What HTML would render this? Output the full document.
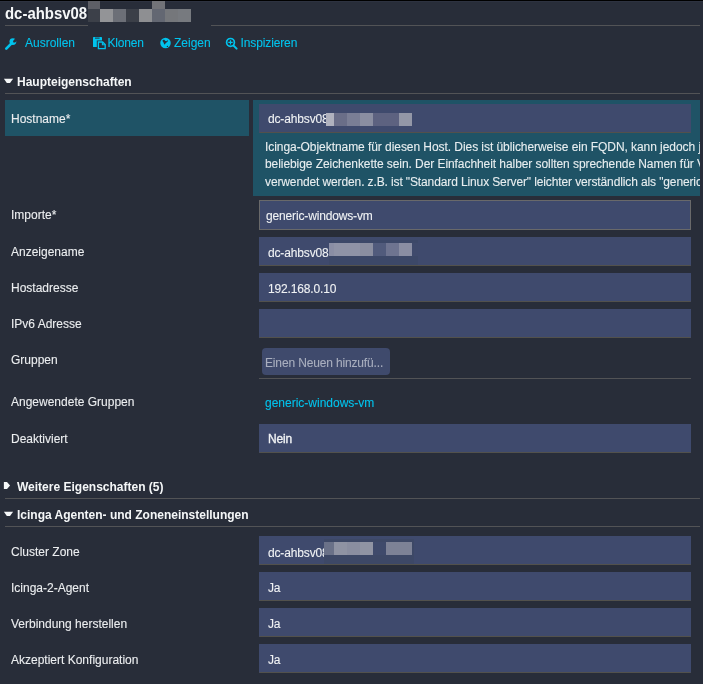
<!DOCTYPE html>
<html><head><meta charset="utf-8">
<style>
*{margin:0;padding:0;box-sizing:border-box}
.lbl,.itxt,.desc,.link{-webkit-text-stroke:0.1px currentColor}
html,body{width:703px;height:684px;overflow:hidden;background:#282d39;font-family:"Liberation Sans",sans-serif;font-size:12px;color:#eef0f2}
.a{position:absolute;white-space:nowrap}
.topline{position:absolute;left:0;top:0;width:703px;height:1px;background:#000;box-shadow:0 1px 0 #2d3240}
.hr{position:absolute;height:1px;background:#525356}
.title{left:5px;top:3px;font-size:16.5px;font-weight:bold;color:#f5f7f8;line-height:20px;transform:scaleX(0.905);transform-origin:0 0}
.px{position:absolute}
.link{color:#00c3ed;font-size:12px}
.sec{font-weight:bold;font-size:12px;color:#f5f7f8}
.lbl{left:11px;color:#eceef0}
.inp{position:absolute;left:259px;width:432px;height:29px;background:#3f4a6d;border-left:1px solid #3f4a6d;border-right:1px solid #3f4a6d;border-bottom:1px solid #52514c}
.desc{color:#e8eef0;letter-spacing:-0.07px}
.itxt{position:absolute;white-space:nowrap;color:#f0f2f4;letter-spacing:-0.15px}
svg{position:absolute;overflow:visible}
</style></head><body><div style="position:absolute;left:0;top:0;width:703px;height:684px;will-change:transform">
<div class="topline"></div>

<!-- title -->
<div class="a title">dc-ahbsv08</div>
<div class="hr" style="left:5px;top:25px;width:83px"></div>
<div class="hr" style="left:211px;top:25px;width:489px"></div>
<!-- pixel blocks title -->
<div class="px" style="left:88px;top:1px;width:12px;height:8px;background:#5e5f66"></div>
<div class="px" style="left:152px;top:1px;width:13px;height:8px;background:#727378"></div>
<div class="px" style="left:88px;top:9px;width:12px;height:13px;background:#3c4049"></div>
<div class="px" style="left:100px;top:9px;width:13px;height:13px;background:#939497"></div>
<div class="px" style="left:113px;top:9px;width:13px;height:13px;background:#6c6f77"></div>
<div class="px" style="left:126px;top:9px;width:13px;height:13px;background:#3b3f48"></div>
<div class="px" style="left:139px;top:9px;width:13px;height:13px;background:#8e8f92"></div>
<div class="px" style="left:152px;top:9px;width:13px;height:13px;background:#636772"></div>
<div class="px" style="left:165px;top:9px;width:13px;height:13px;background:#75777b"></div>
<div class="px" style="left:178px;top:9px;width:13px;height:13px;background:#777a7f"></div>

<!-- actions -->
<div class="a link" style="left:25px;top:36px">Ausrollen</div>
<div class="a link" style="left:107.5px;top:36px;letter-spacing:-0.2px">Klonen</div>
<div class="a link" style="left:174px;top:36px">Zeigen</div>
<div class="a link" style="left:240.5px;top:36px;letter-spacing:-0.12px">Inspizieren</div>


<!-- icons -->
<svg style="left:0;top:0" width="703" height="60">
  <g fill="#00c3ed" stroke="none">
    <line x1="6.3" y1="48.6" x2="11.5" y2="43.4" stroke="#00c3ed" stroke-width="2.7" stroke-linecap="round"/>
    <circle cx="12.9" cy="41.6" r="3.4"/>
    <circle cx="14.3" cy="41.4" r="1.2" fill="#282d39"/>
    <path d="M13.6 40.5 L15.4 38 L17.6 40.6 L15.1 42.2Z" fill="#282d39"/>
    <!-- clone -->
    <rect x="93" y="37" width="9" height="10" rx="0.6"/>
    <rect x="95" y="37.6" width="4.6" height="1" fill="#282d39"/>
    <path d="M96.8 40.4 H103.2 L106.8 44 V49.6 H96.8Z" fill="#282d39"/>
    <path d="M98.4 42 H102.6 L105.2 44.6 V48.6 H98.4Z" fill="none" stroke="#00c3ed" stroke-width="1.3"/>
    <path d="M102.4 42 V44.8 H105.2" fill="none" stroke="#00c3ed" stroke-width="1.1"/>
    <!-- globe -->
    <circle cx="165.5" cy="42.95" r="5.25"/>
    <path d="M162.3 40.7 L164 39.6 L165.4 40.9 L166.4 41.3 L167.9 40.1 L167.7 41.4 L165.6 43.2 L164.9 44.6 L164.2 44.3 L163.4 42.3Z" fill="#282d39"/>
    <circle cx="167.4" cy="46.4" r="0.7" fill="#282d39"/>
    <!-- search -->
    <circle cx="230.5" cy="42.4" r="3.9" fill="none" stroke="#00c3ed" stroke-width="1.7"/>
    <path d="M228.3 42.4 H232.7 M230.5 40.2 V44.6" stroke="#00c3ed" stroke-width="1.2"/>
    <line x1="233.6" y1="45.6" x2="236.6" y2="48.6" stroke="#00c3ed" stroke-width="2" stroke-linecap="round"/>
  </g>
</svg>

<!-- section 1 -->
<svg style="left:0;top:0" width="20" height="20"><path d="M3.9 78.8H13.1L10 83.1H6.8Z" fill="#f5f7f8"/></svg>
<div class="a sec" style="left:17px;top:75px">Haupteigenschaften</div>
<div class="hr" style="left:5px;top:93px;width:695px"></div>

<!-- hostname -->
<div class="px" style="left:5px;top:100px;width:244px;height:36px;background:#1f5366"></div>
<div class="a lbl" style="top:112px">Hostname*</div>
<div class="px" style="left:253px;top:100px;width:447px;height:96px;background:#1f5366;overflow:hidden">
</div>
<div class="inp" style="top:104px"></div>
<div class="itxt" style="left:268px;top:112px">dc-ahbsv08</div>

<!-- labels -->
<div class="a lbl" style="top:208px">Importe*</div>
<div class="a lbl" style="top:245px">Anzeigename</div>
<div class="a lbl" style="top:281px">Hostadresse</div>
<div class="a lbl" style="top:317px">IPv6 Adresse</div>
<div class="a lbl" style="top:353px">Gruppen</div>
<div class="a lbl" style="top:395px">Angewendete Gruppen</div>
<div class="a lbl" style="top:432px">Deaktiviert</div>

<!-- description -->
<div class="a desc" style="left:265px;top:140px;letter-spacing:-0.06px">Icinga-Objektname für diesen Host. Dies ist üblicherweise ein FQDN, kann jedoch jede</div>
<div class="a desc" style="left:265px;top:157px">beliebige Zeichenkette sein. Der Einfachheit halber sollten sprechende Namen für Vorlagen</div>
<div class="a desc" style="left:265px;top:175px;letter-spacing:-0.12px">verwendet werden. z.B. ist "Standard Linux Server" leichter verständlich als "generic-linux"</div>
<div class="px" style="left:700px;top:100px;width:3px;height:96px;background:#282d39"></div>

<!-- hostname blocks -->
<div class="px" style="left:326px;top:113px;width:8px;height:13px;background:#b0b2be"></div>
<div class="px" style="left:334px;top:113px;width:13px;height:13px;background:#6a6e88"></div>
<div class="px" style="left:347px;top:113px;width:13px;height:13px;background:#7a7e95"></div>
<div class="px" style="left:360px;top:113px;width:13px;height:13px;background:#8a8ea1"></div>
<div class="px" style="left:373px;top:113px;width:26px;height:13px;background:#5d6280"></div>
<div class="px" style="left:399px;top:113px;width:13px;height:13px;background:#9397a7"></div>

<!-- importe -->
<div class="inp" style="top:200px;height:30px;border:1px solid #69696a"></div>
<div class="itxt" style="left:266px;top:209px">generic-windows-vm</div>
<!-- anzeigename -->
<div class="inp" style="top:237px"></div>
<div class="itxt" style="left:268px;top:246px">dc-ahbsv08</div>
<div class="px" style="left:329px;top:240px;width:89px;height:25px;background:#3c4868"></div>
<div class="px" style="left:329px;top:243px;width:5px;height:13px;background:#8a8ea4"></div>
<div class="px" style="left:334px;top:243px;width:26px;height:13px;background:#8f93a6"></div>
<div class="px" style="left:360px;top:243px;width:13px;height:13px;background:#8a8ea0"></div>
<div class="px" style="left:373px;top:243px;width:13px;height:13px;background:#515b7c"></div>
<div class="px" style="left:386px;top:243px;width:13px;height:13px;background:#6e7490"></div>
<div class="px" style="left:399px;top:243px;width:13px;height:13px;background:#8a8ea3"></div>
<div class="px" style="left:412px;top:243px;width:6px;height:13px;background:#3f4a6c"></div>
<!-- hostadresse -->
<div class="inp" style="top:273px"></div>
<div class="itxt" style="left:268px;top:282px">192.168.0.10</div>
<!-- ipv6 -->
<div class="inp" style="top:309px"></div>
<!-- gruppen -->
<div class="px btn" style="left:262px;top:348px;width:128px;height:27px;background:#3f4a6c;border-radius:4px"></div>
<div class="itxt" style="left:265px;top:356px;color:#a9afbf">Einen Neuen hinzufü...</div>
<div class="hr" style="left:259px;top:378px;width:432px"></div>
<!-- angewendete -->
<div class="a link" style="left:265px;top:396px">generic-windows-vm</div>
<!-- deaktiviert -->
<div class="inp" style="top:424px"></div>
<div class="itxt" style="left:268px;top:432px;-webkit-text-stroke:0.35px #f0f2f4">Nein</div>

<!-- section 2 -->
<svg style="left:0;top:0" width="20" height="20"><path d="M3.9 481.9H7L10.1 485.5L7 489.1H3.9Z" fill="#f5f7f8"/></svg>
<div class="a sec" style="left:17px;top:480px">Weitere Eigenschaften (5)</div>
<div class="hr" style="left:5px;top:498px;width:695px"></div>
<!-- section 3 -->
<svg style="left:0;top:0" width="20" height="20"><path d="M3.9 511.8H13.1L10 516.1H6.8Z" fill="#f5f7f8"/></svg>
<div class="a sec" style="left:17px;top:508px">Icinga Agenten- und Zoneneinstellungen</div>
<div class="hr" style="left:5px;top:526px;width:695px"></div>

<div class="a lbl" style="top:545px">Cluster Zone</div>
<div class="a lbl" style="top:581px">Icinga-2-Agent</div>
<div class="a lbl" style="top:617px">Verbindung herstellen</div>
<div class="a lbl" style="top:653px">Akzeptiert Konfiguration</div>

<div class="inp" style="top:536px"></div>
<div class="itxt" style="left:268px;top:546px">dc-ahbsv08</div>
<div class="px" style="left:324px;top:539px;width:90px;height:25px;background:#3d4866"></div>
<div class="px" style="left:324px;top:542px;width:10px;height:13px;background:#6a7188"></div>
<div class="px" style="left:334px;top:542px;width:13px;height:13px;background:#8f93a3"></div>
<div class="px" style="left:347px;top:542px;width:13px;height:13px;background:#8a8ea0"></div>
<div class="px" style="left:360px;top:542px;width:13px;height:13px;background:#9094a3"></div>
<div class="px" style="left:373px;top:542px;width:13px;height:13px;background:#3f4a6b"></div>
<div class="px" style="left:386px;top:542px;width:26px;height:13px;background:#7d8296"></div>

<div class="inp" style="top:572px"></div>
<div class="itxt" style="left:268px;top:581px">Ja</div>
<div class="inp" style="top:608px"></div>
<div class="itxt" style="left:268px;top:617px">Ja</div>
<div class="inp" style="top:644px"></div>
<div class="itxt" style="left:268px;top:653px">Ja</div>

</div></body></html>
